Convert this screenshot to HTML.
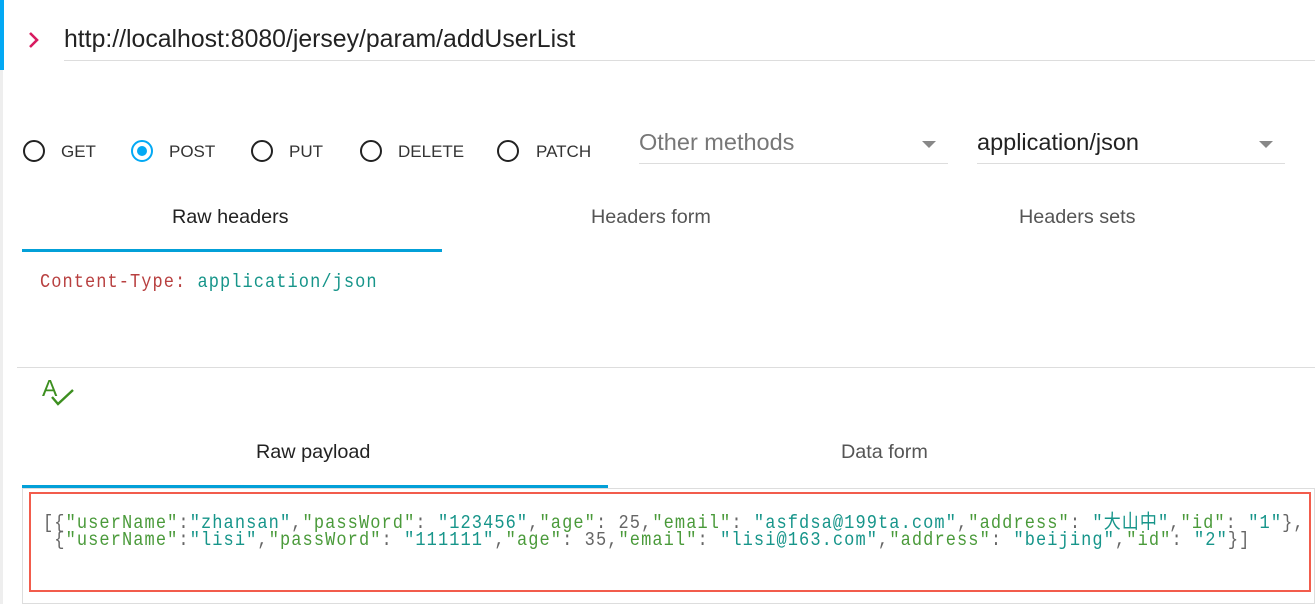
<!DOCTYPE html>
<html><head><meta charset="utf-8"><style>
body{margin:0;width:1315px;height:604px;background:#fff;position:relative;overflow:hidden;font-family:"Liberation Sans",sans-serif;color:#333}
.a{position:absolute;white-space:pre}
.r{position:absolute;width:22px;height:22px;border:2.5px solid #222;border-radius:50%;box-sizing:border-box;top:140px}
.lbl{position:absolute;top:142px;font-size:17px;color:#333}
.mono{font-family:"Liberation Mono","Noto Sans CJK SC",monospace;font-size:17px;letter-spacing:1.08px;color:#666;transform:scaleY(1.15);transform-origin:0 0}
.k{color:#4a9a3a}.s{color:#17958a}
.tab{font-size:19.8px}
</style></head><body>
<div class="a" style="left:0;top:0;width:4px;height:70px;background:#03a9f4"></div>
<div class="a" style="left:0;top:70px;width:3px;height:534px;background:#eee"></div>
<svg class="a" style="left:27px;top:31px" width="14" height="18"><path d="M3 2 L10 9 L3 16" stroke="#d81b60" stroke-width="2.6" fill="none"/></svg>
<div class="a" style="left:64px;top:26px;font-size:24.8px;color:#222">http://localhost:8080/jersey/param/addUserList</div>
<div class="a" style="left:64px;top:60px;width:1251px;height:1px;background:#ddd"></div>

<div class="r" style="left:23px"></div><div class="lbl" style="left:61px">GET</div>
<div class="r" style="left:131px;border-color:#03a9f4"><div style="position:absolute;left:3.5px;top:3.5px;width:10px;height:10px;border-radius:50%;background:#03a9f4"></div></div><div class="lbl" style="left:169px">POST</div>
<div class="r" style="left:251px"></div><div class="lbl" style="left:289px">PUT</div>
<div class="r" style="left:360px"></div><div class="lbl" style="left:398px">DELETE</div>
<div class="r" style="left:497px"></div><div class="lbl" style="left:536px">PATCH</div>

<div class="a" style="left:639px;top:129px;font-size:23.5px;color:#777">Other methods</div>
<div class="a" style="left:922px;top:141px;width:0;height:0;border-left:7px solid transparent;border-right:7px solid transparent;border-top:7px solid #888"></div>
<div class="a" style="left:639px;top:163px;width:309px;height:1px;background:#ddd"></div>
<div class="a" style="left:977px;top:129px;font-size:23.5px;color:#222">application/json</div>
<div class="a" style="left:1259px;top:141px;width:0;height:0;border-left:7px solid transparent;border-right:7px solid transparent;border-top:7px solid #888"></div>
<div class="a" style="left:977px;top:163px;width:308px;height:1px;background:#ddd"></div>

<div class="a tab" style="left:172px;top:206px;color:#222">Raw headers</div>
<div class="a tab" style="left:591px;top:206px;color:#555">Headers form</div>
<div class="a tab" style="left:1019px;top:206px;color:#555">Headers sets</div>
<div class="a" style="left:22px;top:249px;width:420px;height:3px;background:#03a0d8"></div>
<div class="a mono" style="left:40px;top:272px;letter-spacing:1.05px"><span style="color:#b84040">Content-Type:</span> <span class="s">application/json</span></div>

<div class="a" style="left:17px;top:367px;width:1298px;height:1px;background:#ddd"></div>
<svg class="a" style="left:40px;top:374px" width="40" height="36"><text x="2" y="22" font-family="Liberation Sans" font-size="23" fill="#3d8f20">A</text><path d="M12 23 L18 30 L33 16" stroke="#3d8f20" stroke-width="2.4" fill="none"/></svg>

<div class="a tab" style="left:256px;top:441px;color:#222">Raw payload</div>
<div class="a tab" style="left:841px;top:441px;color:#555">Data form</div>
<div class="a" style="left:22px;top:485px;width:586px;height:3px;background:#03a0d8"></div>
<div class="a" style="left:22px;top:488px;width:1293px;height:116px;border:1px solid #ddd;box-sizing:border-box"></div>
<div class="a" style="left:29px;top:492px;width:1282px;height:100px;border:2px solid #f25c4c;box-sizing:border-box"></div>
<div class="a mono" style="left:43px;top:505px">[{<span class="k">"userName"</span>:<span class="s">"zhansan"</span>,<span class="k">"passWord"</span>: <span class="s">"123456"</span>,<span class="k">"age"</span>: 25,<span class="k">"email"</span>: <span class="s">"asfdsa@199ta.com"</span>,<span class="k">"address"</span>: <span class="s">"大山中"</span>,<span class="k">"id"</span>: <span class="s">"1"</span>},</div>
<div class="a mono" style="left:43px;top:530px"> {<span class="k">"userName"</span>:<span class="s">"lisi"</span>,<span class="k">"passWord"</span>: <span class="s">"111111"</span>,<span class="k">"age"</span>: 35,<span class="k">"email"</span>: <span class="s">"lisi@163.com"</span>,<span class="k">"address"</span>: <span class="s">"beijing"</span>,<span class="k">"id"</span>: <span class="s">"2"</span>}]</div>
</body></html>
